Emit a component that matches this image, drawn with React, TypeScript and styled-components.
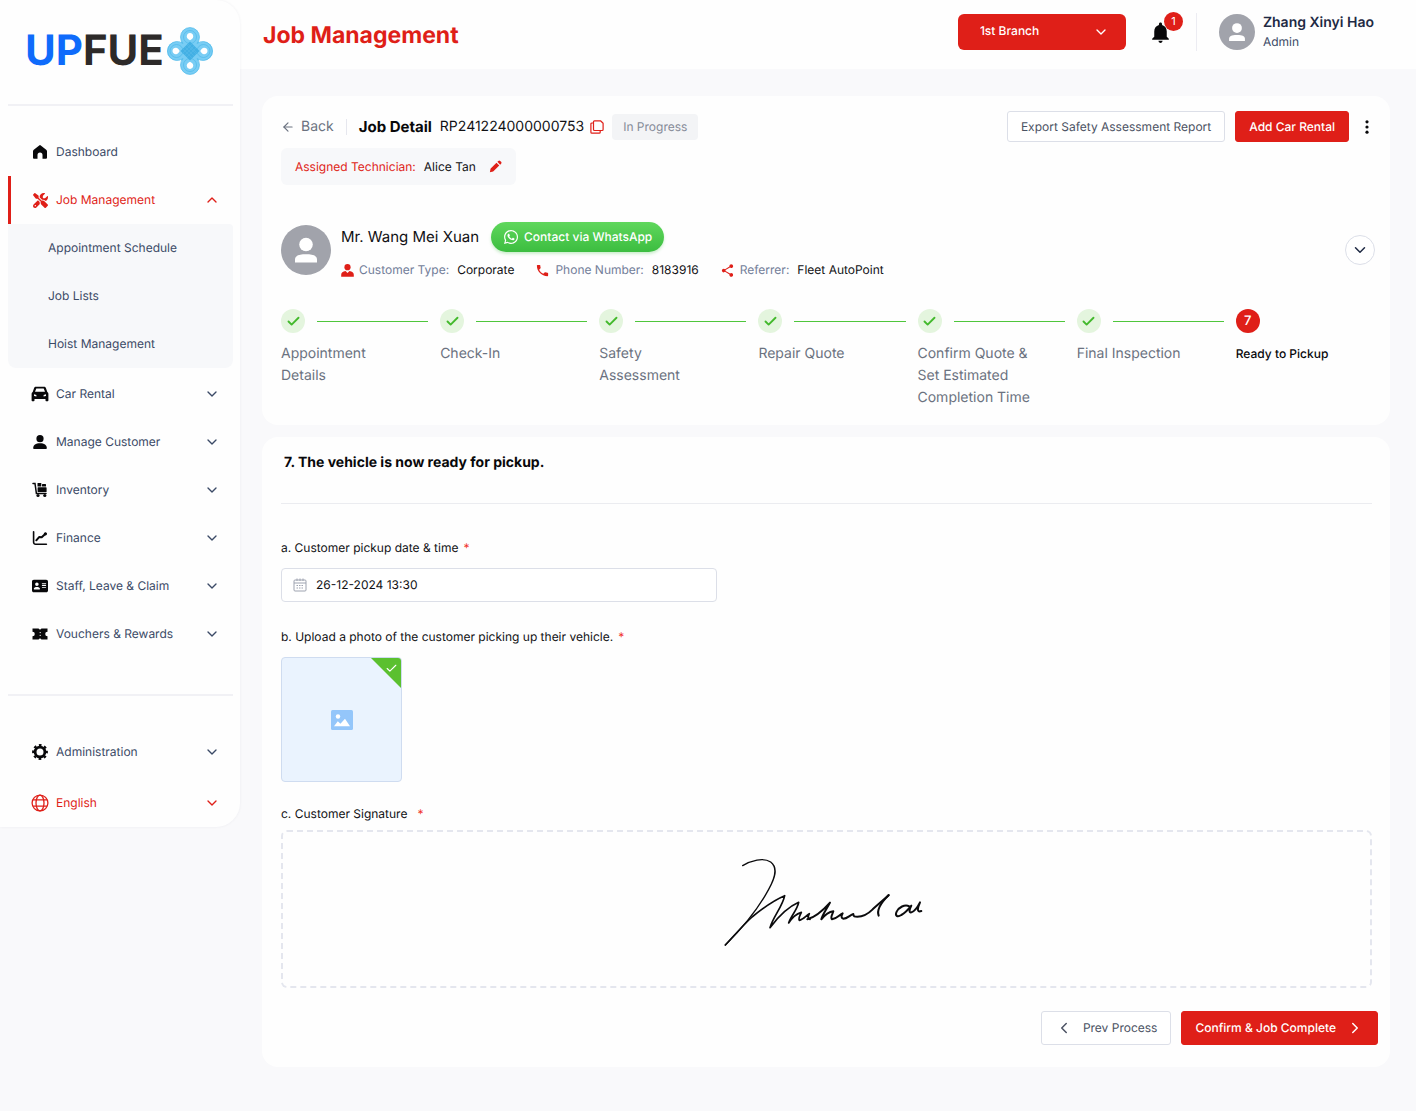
import React from "react";
import styled, { createGlobalStyle } from "styled-components";
import { ChevronDown, ChevronUp, ChevronLeft, ChevronRight, ArrowLeft, Check } from "lucide-react";
import { FaScrewdriverWrench, FaAddressCard, FaWhatsapp } from "react-icons/fa6";
import { MdNotifications, MdShare, MdPhone } from "react-icons/md";
import { BiSolidPencil } from "react-icons/bi";

const red = "#df1f18";
const green = "#43b92c";
const navy = "#3b4a66";
const slate = "#6b7280";

const GlobalStyle = createGlobalStyle`
  *, *::before, *::after { box-sizing: border-box; }
  body {
    margin: 0;
    background: #f9f9fb;
    color: #111114;
    font: 13px/20px Inter, "Liberation Sans", sans-serif;
    text-rendering: geometricPrecision;
  }
  button, input, select { font: inherit; color: inherit; text-rendering: inherit; }
  button { cursor: pointer; }
  h1, h2, h3, p, ol, ul { margin: 0; padding: 0; }
  ol, ul { list-style: none; }
  a { color: inherit; text-decoration: none; }
  svg { display: block; flex-shrink: 0; }
`;

const Page = styled.div`
  display: grid;
  grid-template-columns: 240px minmax(0, 1fr);
  align-items: start;
  min-height: 100vh;
`;

/* Sidebar */
const Sidebar = styled.aside`
  position: relative;
  z-index: 1;
  padding: 0 7px 0 8px;
  background: #fefefe;
  border-radius: 0 24px 24px 0;
  box-shadow: 0 0 3px rgba(30, 30, 60, 0.06);
`;
const Brand = styled.a`
  display: flex;
  align-items: center;
  gap: 2px;
  height: 104px;
  padding: 0 0 2px 17px;
  font-size: 42px;
  font-weight: 700;
  line-height: 48px;
  color: #2d2a29;
`;
const BrandAccent = styled.span`
  color: #0f6bfb;
`;
const Divider = styled.hr`
  height: 2px;
  margin: 0;
  border: 0;
  background: #f1f1f5;
`;
const NavGroup = styled.ul<{ $top: number }>`
  display: flex;
  flex-direction: column;
  gap: ${(p) => (p.$top > 30 ? 3 : 0)}px;
  padding-top: ${(p) => p.$top}px;
`;
const NavButton = styled.button<{ $accent?: boolean; $active?: boolean }>`
  display: flex;
  align-items: center;
  gap: 8px;
  width: 100%;
  height: 48px;
  padding: 0 13px 0 ${(p) => (p.$active ? 21 : 24)}px;
  border: 0;
  border-left: ${(p) => (p.$active ? `3px solid ${red}` : "0")};
  background: none;
  color: ${(p) => (p.$accent ? red : navy)};
  font-size: 12px;
  text-align: left;
`;
const NavIcon = styled.span<{ $accent?: boolean }>`
  display: flex;
  justify-content: center;
  width: 16px;
  color: ${(p) => (p.$accent ? red : "#08080a")};
`;
const NavText = styled.span`
  flex: 1;
`;
const SubMenu = styled.ul`
  margin-bottom: 2px;
  background: #f7f8fa;
  border-radius: 0 4px 8px 8px;
`;
const SubLink = styled.a`
  display: flex;
  align-items: center;
  height: 48px;
  padding-left: 40px;
  font-size: 12px;
  color: ${navy};
`;
const SidebarBreak = styled.div`
  padding-top: 36px;
`;

/* Header */
const Content = styled.div`
  min-width: 0;
`;
const Header = styled.header`
  display: flex;
  align-items: center;
  justify-content: space-between;
  height: 69px;
  margin-left: -40px;
  padding: 0 42px 0 63px;
  background: #fefefe;
`;
const PageTitle = styled.h1`
  font-size: 23px;
  line-height: 32px;
  font-weight: 700;
  color: ${red};
`;
const HeaderTools = styled.div`
  display: flex;
  align-items: center;
  padding-bottom: 5px;
`;
const BranchBox = styled.label`
  display: grid;
  align-items: center;
  width: 168px;
  height: 36px;
  border-radius: 6px;
  background: ${red};
  color: #fff;
  svg {
    grid-area: 1 / 1;
    justify-self: end;
    margin-right: 17px;
    pointer-events: none;
  }
`;
const BranchSelect = styled.select`
  grid-area: 1 / 1;
  width: 100%;
  height: 36px;
  padding: 0 40px 2px 22px;
  border: 0;
  appearance: none;
  background: transparent;
  font-size: 12px;
  font-weight: 500;
`;
const BellButton = styled.button`
  position: relative;
  display: flex;
  margin: 0 23px 0 22px;
  padding: 0;
  border: 0;
  background: none;
  color: #08080a;
`;
const BellBadge = styled.span`
  position: absolute;
  top: -8px;
  right: -10px;
  width: 19px;
  height: 19px;
  border-radius: 50%;
  background: ${red};
  color: #fff;
  font-size: 11px;
  line-height: 19px;
  text-align: center;
`;
const Account = styled.div`
  display: flex;
  align-items: center;
  gap: 8px;
  height: 38px;
  padding-left: 22px;
  border-left: 1px solid #ececf2;
`;
const AccountName = styled.div`
  font-size: 14px;
  font-weight: 600;
  line-height: 20px;
  color: #1f2a44;
`;
const AccountRole = styled.div`
  font-size: 12px;
  line-height: 18px;
  color: ${navy};
`;

/* Cards */
const Main = styled.main`
  display: flex;
  flex-direction: column;
  gap: 12px;
  padding: 27px 26px 40px 22px;
`;
const Card = styled.section`
  background: #fefefe;
  border-radius: 16px;
`;
const DetailCard = styled(Card)`
  padding: 15px 15px 16px 19px;
`;
const Row = styled.div<{ $gap?: number }>`
  display: flex;
  align-items: center;
  gap: ${(p) => p.$gap ?? 0}px;
`;
const Between = styled(Row)`
  justify-content: space-between;
`;
const BackLink = styled.a`
  display: flex;
  align-items: center;
  gap: 6px;
  padding-right: 12px;
  border-right: 1px solid #e6e7ee;
  font-size: 14px;
  line-height: 16px;
  color: ${slate};
`;
const DetailTitle = styled.h2`
  padding: 0 8px 0 12px;
  font-size: 15px;
  font-weight: 700;
  color: #08080a;
`;
const JobNumber = styled.span`
  font-size: 14px;
`;
const IconButton = styled.button`
  display: flex;
  align-items: center;
  justify-content: center;
  padding: 0;
  border: 0;
  background: none;
  color: ${red};
`;
const CopyButton = styled(IconButton)`
  padding: 0 8px 0 6px;
`;
const StatusTag = styled.span`
  padding: 3px 11px;
  border-radius: 4px;
  background: #f3f4f6;
  font-size: 12px;
  color: #868b98;
`;
const Button = styled.button<{ $primary?: boolean; $tall?: boolean }>`
  display: flex;
  align-items: center;
  gap: 10px;
  height: ${(p) => (p.$tall ? 34 : 31)}px;
  padding: 0 13px;
  border: 1px solid ${(p) => (p.$primary ? red : "#dcdfe8")};
  border-radius: 3px;
  background: ${(p) => (p.$primary ? red : "#fff")};
  color: ${(p) => (p.$primary ? "#fff" : "#4b5263")};
  font-size: 12px;
  font-weight: ${(p) => (p.$primary ? 500 : 400)};
  white-space: nowrap;
`;
const KebabButton = styled(IconButton)`
  width: 16px;
  height: 24px;
  color: #08080a;
`;
const Technician = styled.div`
  display: flex;
  align-items: center;
  width: fit-content;
  height: 37px;
  margin-top: 6px;
  padding: 0 13px 0 14px;
  border-radius: 6px;
  background: #f7f8fa;
  font-size: 12px;
`;
const TechnicianLabel = styled.span`
  margin-right: 8px;
  color: ${red};
`;
const TechnicianEdit = styled(IconButton)`
  margin-left: 12px;
`;
const Customer = styled(Between)`
  margin-top: 37px;
`;
const CustomerBody = styled.div`
  display: flex;
  flex-direction: column;
  gap: 10px;
`;
const CustomerName = styled.h3`
  font-size: 15px;
  line-height: 24px;
  font-weight: 400;
`;
const WhatsAppButton = styled.button`
  display: flex;
  align-items: center;
  gap: 5px;
  height: 30px;
  padding: 0 12px;
  border: 0;
  border-radius: 15px;
  background: linear-gradient(#5fd75c, #3cbd40);
  box-shadow: 0 2px 3px rgba(60, 190, 64, 0.25);
  color: #fff;
  font-size: 12px;
  font-weight: 500;
`;
const Facts = styled.dl`
  display: flex;
  gap: 21px;
  margin: 0;
  font-size: 12px;
  line-height: 16px;
`;
const Fact = styled.div`
  display: flex;
  align-items: center;
  color: ${red};
`;
const FactLabel = styled.dt`
  margin: 0 8px 0 5px;
  color: #727d99;
`;
const FactValue = styled.dd`
  margin: 0;
  color: #111114;
`;
const ExpandButton = styled.button`
  display: flex;
  align-items: center;
  justify-content: center;
  width: 30px;
  height: 30px;
  padding: 0;
  border: 1px solid #dcdfe8;
  border-radius: 50%;
  background: #fff;
  color: #1f2a44;
`;
const Steps = styled.ol`
  display: grid;
  grid-template-columns: repeat(6, 8fr) 7fr;
  margin-top: 31px;
`;
const StepHead = styled.div<{ $last?: boolean }>`
  display: flex;
  align-items: center;
  gap: 12px;
  padding-right: 12px;
  &::after {
    content: "";
    flex: 1;
    border-top: 1px solid ${(p) => (p.$last ? "transparent" : "#4fc63c")};
  }
`;
const StepDot = styled.span<{ $current?: boolean }>`
  display: flex;
  align-items: center;
  justify-content: center;
  width: 24px;
  height: 24px;
  border-radius: 50%;
  background: ${(p) => (p.$current ? red : "#e4f5de")};
  color: ${(p) => (p.$current ? "#fff" : green)};
  font-size: 13px;
  font-weight: 500;
`;
const StepLabel = styled.p<{ $current?: boolean }>`
  max-width: 116px;
  margin-top: 10px;
  font-size: ${(p) => (p.$current ? 12 : 14)}px;
  font-weight: ${(p) => (p.$current ? 500 : 400)};
  line-height: 22px;
  color: ${(p) => (p.$current ? "#08080a" : slate)};
`;

/* Pickup form */
const FormCard = styled(Card)`
  padding: 16px 12px 22px 19px;
`;
const FormBody = styled.div`
  padding-right: 6px;
`;
const FormTitle = styled.h2`
  padding: 0 0 30px 3px;
  border-bottom: 1px solid #ebecf0;
  font-size: 14px;
  font-weight: 700;
  color: #08080a;
`;
const Field = styled.div<{ $top: number; $gap: number }>`
  display: flex;
  flex-direction: column;
  align-items: flex-start;
  gap: ${(p) => p.$gap}px;
  padding-top: ${(p) => p.$top}px;
`;
const Label = styled.label`
  font-size: 12px;
  line-height: 20px;
`;
const Required = styled.span<{ $wide?: boolean }>`
  margin-left: ${(p) => (p.$wide ? 10 : 5)}px;
  color: #f03028;
`;
const DateBox = styled.div`
  display: flex;
  align-items: center;
  gap: 9px;
  width: 40%;
  min-width: 240px;
  height: 34px;
  padding: 0 11px;
  border: 1px solid #dcdfe8;
  border-radius: 4px;
  background: #fff;
`;
const DateInput = styled.input`
  flex: 1;
  min-width: 0;
  padding: 0;
  border: 0;
  outline: 0;
  background: none;
  font-size: 12px;
`;
const Thumb = styled.button`
  position: relative;
  display: flex;
  align-items: center;
  justify-content: center;
  width: 121px;
  height: 125px;
  padding: 0;
  overflow: hidden;
  border: 1px solid #cfdcf0;
  border-radius: 4px;
  background: #eaf3fe;
`;
const ThumbCorner = styled.span`
  position: absolute;
  top: 0;
  right: 0;
  width: 30px;
  height: 30px;
  padding: 4px 3px;
  background: #5bc02f;
  clip-path: polygon(0 0, 100% 0, 100% 100%);
  color: #fff;
  svg {
    margin-left: auto;
  }
`;
const SignatureBox = styled.div`
  display: flex;
  align-items: center;
  justify-content: center;
  width: 100%;
  height: 158px;
  padding: 0 6px 13px 0;
  border: 2px dashed #e4e6ee;
  border-radius: 6px;
`;
const Footer = styled.footer`
  display: flex;
  justify-content: flex-end;
  gap: 10px;
  padding-top: 23px;
`;

/* Drawings */
const KnotLogo = () => (
  <svg width="48" height="50" viewBox="0 0 48 50" fill="none" aria-hidden="true">
    <g fill="#79cdf4">
      <circle cx="24" cy="11" r="9.5" />
      <circle cx="10.500" cy="25" r="9.500" />
      <circle cx="37.500" cy="25" r="9.500" />
      <circle cx="24" cy="39" r="9.5" />
      <path d="M24 7 42 25 24 43 6 25Z" />
    </g>
    <g stroke="#4db9ea" strokeWidth=".7">
      <path d="M17 17.500a9.500 9.500 0 1 1 14 0a9.500 9.500 0 1 1 0 15a9.500 9.500 0 1 1-14 0a9.500 9.500 0 1 1 0-15Z" />
      <circle cx="24" cy="11" r="6.500" />
      <circle cx="10.500" cy="25" r="6.500" />
      <circle cx="37.500" cy="25" r="6.500" />
      <circle cx="24" cy="39" r="6.500" />
    </g>
    <path d="M24 15.500 33.500 25 24 34.500 14.500 25Z" fill="#43b0e4" />
    <path d="m17 23 9 9m-7-11 9 9m-7-11 9 9m-8-10 9 9M17 27l9-9m-7 11 9-9m-7 11 9-9" stroke="#5dbdea" strokeWidth=".5" />
    <g fill="#fff">
      <path d="M24 7c2 0 3.200 1.600 3.200 3.400 0 1.700-1.500 2.900-3.200 3.800-1.700-.9-3.200-2.100-3.200-3.800C20.800 8.600 22 7 24 7Z" />
      <path d="M24 43c2 0 3.200-1.600 3.200-3.400 0-1.700-1.500-2.900-3.200-3.800-1.700.9-3.200 2.100-3.200 3.800 0 1.800 1.200 3.400 3.200 3.400Z" />
      <path d="M6.500 25c0-2 1.600-3.200 3.400-3.200 1.700 0 2.900 1.500 3.800 3.200-.9 1.700-2.100 3.200-3.800 3.200-1.800 0-3.400-1.200-3.400-3.200Z" />
      <path d="M41.500 25c0-2-1.600-3.200-3.400-3.200-1.700 0-2.900 1.500-3.800 3.200.9 1.700 2.100 3.200 3.800 3.200 1.800 0 3.400-1.200 3.400-3.200Z" />
    </g>
  </svg>
);
const HomeIcon = () => (
  <svg width="16" height="16" viewBox="0 0 16 16" fill="currentColor" aria-hidden="true">
    <path d="M7.200 1.400a1.300 1.300 0 0 1 1.600 0l5.400 4.300c.5.400.8.900.8 1.500v6.600c0 .5-.4.900-.9.900h-3.600V11a2.500 2.500 0 0 0-5 0v3.700H1.900a.9.900 0 0 1-.9-.9V7.200c0-.6.300-1.100.8-1.500Z" />
  </svg>
);
const CarIcon = () => (
  <svg width="18" height="16" viewBox="0 0 18 16" fill="currentColor" aria-hidden="true">
    <path fillRule="evenodd" d="M5 .8h8c.9 0 1.600.5 1.900 1.300l1.400 3.800c.7.400 1.100 1 1.100 1.800v6.500c0 .6-.4 1-1 1h-.9c-.6 0-1-.4-1-1v-1.300h-11v1.300c0 .6-.4 1-1 1h-.900c-.6 0-1-.4-1-1V7.700c0-.8.400-1.400 1.100-1.800l1.400-3.800C3.400 1.300 4.100.8 5 .8Zm.3 1.600-1.300 3.400h10l-1.300-3.400ZM3 8.300v1.800l2.400.4V9Zm12 0L12.600 9v1.500l2.400-.4Z" />
  </svg>
);
const PersonIcon = () => (
  <svg width="16" height="16" viewBox="0 0 16 16" fill="currentColor" aria-hidden="true">
    <circle cx="8" cy="4.700" r="3.600" />
    <path d="M1.200 14c0-3 2.500-4.800 6.800-4.800s6.800 1.800 6.800 4.800c0 .6-.4 1-1 1H2.200c-.6 0-1-.4-1-1Z" />
  </svg>
);
const CartIcon = () => (
  <svg width="16" height="16" viewBox="0 0 16 16" fill="currentColor" aria-hidden="true">
    <path d="M1 1.500h2l1.400 10h9.600" fill="none" stroke="currentColor" strokeWidth="1.500" strokeLinecap="round" />
    <rect x="5.500" y="1" width="3.800" height="3.600" rx=".5" />
    <rect x="10" y="2" width="4" height="2.600" rx=".5" />
    <rect x="5.600" y="5.300" width="9" height="4.700" rx=".6" />
    <circle cx="6" cy="13.500" r="1.600" />
    <circle cx="12.800" cy="13.500" r="1.600" />
  </svg>
);
const TrendIcon = () => (
  <svg width="16" height="16" viewBox="0 0 16 16" fill="none" stroke="currentColor" strokeWidth="1.600" strokeLinecap="round" strokeLinejoin="round" aria-hidden="true">
    <path d="M1.600 1.800v10.400a2 2 0 0 0 2 2h10.800" />
    <path d="m4.300 10.300 2.800-3.200 2.600.2 3.800-3.600" strokeWidth="2" />
    <circle cx="13.400" cy="3.800" r=".8" fill="currentColor" />
  </svg>
);
const VoucherIcon = () => (
  <svg width="16" height="16" viewBox="0 0 16 16" fill="currentColor" aria-hidden="true">
    <path d="M.5 2.500h6l1.500 1.300 1.500-1.300h6v3.200a2.300 2.300 0 0 0 0 4.600v3.200h-6L8 12.200l-1.500 1.300h-6v-3.200a2.300 2.300 0 0 0 0-4.600Z" />
    <path d="M8.200 6v1.100M8.200 8.900V10" stroke="#fff" />
  </svg>
);
const GearIcon = () => (
  <svg width="16" height="16" viewBox="0 0 16 16" fill="none" stroke="currentColor" aria-hidden="true">
    <circle cx="8" cy="8" r="4.900" strokeWidth="2.800" />
    <circle cx="8" cy="8" r="6.900" strokeWidth="2" strokeDasharray="2.700 2.719" strokeDashoffset="1.350" />
  </svg>
);
const GlobeIcon = () => (
  <svg width="18" height="18" viewBox="0 0 18 18" fill="none" stroke="currentColor" strokeWidth="1.300" aria-hidden="true">
    <circle cx="9" cy="9" r="7.900" />
    <ellipse cx="9" cy="9" rx="4" ry="7.900" />
    <path d="M2 5.900h14M2 12.100h14" />
  </svg>
);
const TiePersonIcon = () => (
  <svg width="13" height="13" viewBox="0 0 13 13" fill="currentColor" aria-hidden="true">
    <circle cx="6.500" cy="3.200" r="3.100" />
    <path d="M.2 12.800v-2c0-2 1.700-3.300 4.300-3.700l2 1.800 2-1.800c2.600.4 4.300 1.700 4.300 3.700v2Z" />
  </svg>
);
const CopyIcon = () => (
  <svg width="14" height="14" viewBox="0 0 14 14" fill="none" stroke="currentColor" strokeWidth="1.200" strokeLinejoin="round" aria-hidden="true">
    <path d="M4.500.8h6l2.600 2.400v6.300a1 1 0 0 1-1 1H4.500a1 1 0 0 1-1-1V1.800a1 1 0 0 1 1-1Z" />
    <path d="M3.300 3H1.900a1 1 0 0 0-1 1v8.200a1 1 0 0 0 1 1h7.300a1 1 0 0 0 1-1v-1.500" />
  </svg>
);
const DotsIcon = () => (
  <svg width="4" height="14" viewBox="0 0 4 14" fill="currentColor" aria-hidden="true">
    <circle cx="2" cy="1.800" r="1.600" />
    <circle cx="2" cy="7" r="1.600" />
    <circle cx="2" cy="12.200" r="1.600" />
  </svg>
);
const CalendarIcon = () => (
  <svg width="14" height="14" viewBox="0 0 14 14" fill="none" stroke="#9ea3b0" aria-hidden="true">
    <rect x="1" y="2" width="12" height="11" rx="1" />
    <path d="M1 5h12M4 .5V3M10 .5V3M7 .5V3" />
    <path d="M3.500 7.500h7M3.500 10h7" strokeDasharray="1.500 1" />
  </svg>
);
const PictureIcon = () => (
  <svg width="22" height="20" viewBox="0 0 22 20" aria-hidden="true">
    <rect width="22" height="20" rx="1.500" fill="#94c6fa" />
    <circle cx="7" cy="6.500" r="2.200" fill="#fff" />
    <path d="M3 16.200 6.800 11.300l2.600 2.500L14 8.800l5 7.400Z" fill="#fff" />
  </svg>
);
const AvatarIcon = ({ size }: { size: number }) => (
  <svg width={size} height={size} viewBox="0 0 50 50" role="img" aria-label="Profile picture">
    <circle cx="25" cy="25" r="25" fill="#a1a3ab" />
    <circle cx="25" cy="19.500" r="6.800" fill="#fff" />
    <path d="M14 37.500v-2.800c0-3.700 3-5.500 11-5.500s11 1.800 11 5.500v2.800Z" fill="#fff" />
  </svg>
);
const Signature = () => (
  <svg width="204" height="92" viewBox="66 54 612 276" fill="none" stroke="#0b0b0d" strokeLinecap="round" strokeLinejoin="round" role="img" aria-label="Customer signature">
    <path strokeWidth="4" d="M128 80C152 65 190 54 212 69c24 18 12 50-6 82-30 56-78 115-130 167" />
    <path strokeWidth="5" d="M76 318c28-30 50-56 80-84 34-28 60-48 98-64-6 32-34 62-44 96 24-32 54-62 86-76-4 22-24 42-30 62 10-16 24-28 38-32-4 10-10 18-6 24 12-2 20-14 30-20-4 8-6 16 2 17" />
    <path strokeWidth="6" d="M322 241c24-6 50-30 68-50-8 16-22 34-26 50 10-12 22-22 36-24-2 8-10 18-4 24 14-2 20-12 32-18-4 8-6 14 2 16 12 0 18-10 30-14 0 8 4 8 12 8 20 0 32-8 46-22 18-16 32-28 48-42" />
    <path strokeWidth="6" d="M566 168c-16 16-38 42-30 62" />
    <path strokeWidth="6" d="M628 202c-14-8-32 4-38 16-6 12 2 18 14 10 12-6 22-18 30-28-6 12-8 22 0 20 12-4 20-18 26-30-6 14-12 32 4 26" />
  </svg>
);

type NavEntry = { text: string; icon: React.ReactNode };
const lowerNav: NavEntry[] = [
  { text: "Car Rental", icon: <CarIcon /> },
  { text: "Manage Customer", icon: <PersonIcon /> },
  { text: "Inventory", icon: <CartIcon /> },
  { text: "Finance", icon: <TrendIcon /> },
  { text: "Staff, Leave & Claim", icon: <FaAddressCard size={16} /> },
  { text: "Vouchers & Rewards", icon: <VoucherIcon /> },
];
const steps = [
  "Appointment Details",
  "Check-In",
  "Safety Assessment",
  "Repair Quote",
  "Confirm Quote & Set Estimated Completion Time",
  "Final Inspection",
  "Ready to Pickup",
];

const NavItem = ({ text, icon, accent }: NavEntry & { accent?: boolean }) => (
  <li>
    <NavButton type="button" $accent={accent}>
      <NavIcon $accent={accent}>{icon}</NavIcon>
      <NavText>{text}</NavText>
      <ChevronDown size={16} strokeWidth={2} />
    </NavButton>
  </li>
);

export default function App() {
  return (
    <Page>
      <GlobalStyle />
      <Sidebar>
        <Brand href="#">
          <span>
            <BrandAccent>UP</BrandAccent>FUE
          </span>
          <KnotLogo />
        </Brand>
        <Divider />
        <nav aria-label="Main">
          <NavGroup $top={22}>
            <li>
              <NavButton type="button">
                <NavIcon>
                  <HomeIcon />
                </NavIcon>
                <NavText>Dashboard</NavText>
              </NavButton>
            </li>
            <li>
              <NavButton type="button" $accent $active aria-expanded="true">
                <NavIcon $accent>
                  <FaScrewdriverWrench size={15} />
                </NavIcon>
                <NavText>Job Management</NavText>
                <ChevronUp size={16} strokeWidth={2} />
              </NavButton>
              <SubMenu>
                <li><SubLink href="#schedule">Appointment Schedule</SubLink></li>
                <li><SubLink href="#lists">Job Lists</SubLink></li>
                <li><SubLink href="#hoist">Hoist Management</SubLink></li>
              </SubMenu>
            </li>
            {lowerNav.map((item) => (
              <NavItem key={item.text} {...item} />
            ))}
          </NavGroup>
          <SidebarBreak>
            <Divider />
          </SidebarBreak>
          <NavGroup $top={32}>
            <NavItem text="Administration" icon={<GearIcon />} />
            <NavItem text="English" icon={<GlobeIcon />} accent />
          </NavGroup>
        </nav>
      </Sidebar>

      <Content>
        <Header>
          <PageTitle>Job Management</PageTitle>
          <HeaderTools>
            <BranchBox>
              <BranchSelect aria-label="Branch">
                <option>1st Branch</option>
              </BranchSelect>
              <ChevronDown size={16} strokeWidth={2} />
            </BranchBox>
            <BellButton type="button" aria-label="Notifications">
              <MdNotifications size={25} />
              <BellBadge>1</BellBadge>
            </BellButton>
            <Account>
              <AvatarIcon size={36} />
              <div>
                <AccountName>Zhang Xinyi Hao</AccountName>
                <AccountRole>Admin</AccountRole>
              </div>
            </Account>
          </HeaderTools>
        </Header>

        <Main>
          <DetailCard>
            <Between>
              <Row>
                <BackLink href="#back">
                  <ArrowLeft size={14} strokeWidth={2} />
                  Back
                </BackLink>
                <DetailTitle>Job Detail</DetailTitle>
                <JobNumber>RP241224000000753</JobNumber>
                <CopyButton type="button" aria-label="Copy job number">
                  <CopyIcon />
                </CopyButton>
                <StatusTag>In Progress</StatusTag>
              </Row>
              <Row $gap={10}>
                <Button type="button">Export Safety Assessment Report</Button>
                <Button type="button" $primary>Add Car Rental</Button>
                <KebabButton type="button" aria-label="More actions">
                  <DotsIcon />
                </KebabButton>
              </Row>
            </Between>
            <Technician>
              <TechnicianLabel>Assigned Technician:</TechnicianLabel>
              Alice Tan
              <TechnicianEdit type="button" aria-label="Change technician">
                <BiSolidPencil size={15} />
              </TechnicianEdit>
            </Technician>

            <Customer>
              <Row $gap={10}>
                <AvatarIcon size={50} />
                <CustomerBody>
                  <Row $gap={12}>
                    <CustomerName>Mr. Wang Mei Xuan</CustomerName>
                    <WhatsAppButton type="button">
                      <FaWhatsapp size={16} />
                      Contact via WhatsApp
                    </WhatsAppButton>
                  </Row>
                  <Facts>
                    <Fact>
                      <TiePersonIcon />
                      <FactLabel>Customer Type:</FactLabel>
                      <FactValue>Corporate</FactValue>
                    </Fact>
                    <Fact>
                      <MdPhone size={15} />
                      <FactLabel>Phone Number:</FactLabel>
                      <FactValue>8183916</FactValue>
                    </Fact>
                    <Fact>
                      <MdShare size={15} />
                      <FactLabel>Referrer:</FactLabel>
                      <FactValue>Fleet AutoPoint</FactValue>
                    </Fact>
                  </Facts>
                </CustomerBody>
              </Row>
              <ExpandButton type="button" aria-label="Show customer details">
                <ChevronDown size={18} strokeWidth={2} />
              </ExpandButton>
            </Customer>

            <Steps>
              {steps.map((step, index) => {
                const current = index === steps.length - 1;
                return (
                  <li key={step} aria-current={current ? "step" : undefined}>
                    <StepHead $last={current}>
                      <StepDot $current={current}>
                        {current ? index + 1 : <Check size={15} strokeWidth={3} />}
                      </StepDot>
                    </StepHead>
                    <StepLabel $current={current}>{step}</StepLabel>
                  </li>
                );
              })}
            </Steps>
          </DetailCard>

          <FormCard as="form">
            <FormBody>
              <FormTitle>7. The vehicle is now ready for pickup.</FormTitle>
              <Field $top={34} $gap={10}>
                <Label htmlFor="pickup">
                  a. Customer pickup date &amp; time<Required>*</Required>
                </Label>
                <DateBox>
                  <CalendarIcon />
                  <DateInput id="pickup" type="text" defaultValue="26-12-2024 13:30" />
                </DateBox>
              </Field>
              <Field $top={25} $gap={10}>
                <Label htmlFor="photo">
                  b. Upload a photo of the customer picking up their vehicle.<Required>*</Required>
                </Label>
                <Thumb id="photo" type="button">
                  <PictureIcon />
                  <ThumbCorner>
                    <Check size={13} strokeWidth={2} />
                  </ThumbCorner>
                </Thumb>
              </Field>
              <Field $top={22} $gap={6}>
                <Label as="span">
                  c. Customer Signature<Required $wide>*</Required>
                </Label>
                <SignatureBox>
                  <Signature />
                </SignatureBox>
              </Field>
            </FormBody>
            <Footer>
              <Button type="button" $tall>
                <ChevronLeft size={18} strokeWidth={2} />
                Prev Process
              </Button>
              <Button type="button" $primary $tall>
                Confirm &amp; Job Complete
                <ChevronRight size={18} strokeWidth={2} />
              </Button>
            </Footer>
          </FormCard>
        </Main>
      </Content>
    </Page>
  );
}
